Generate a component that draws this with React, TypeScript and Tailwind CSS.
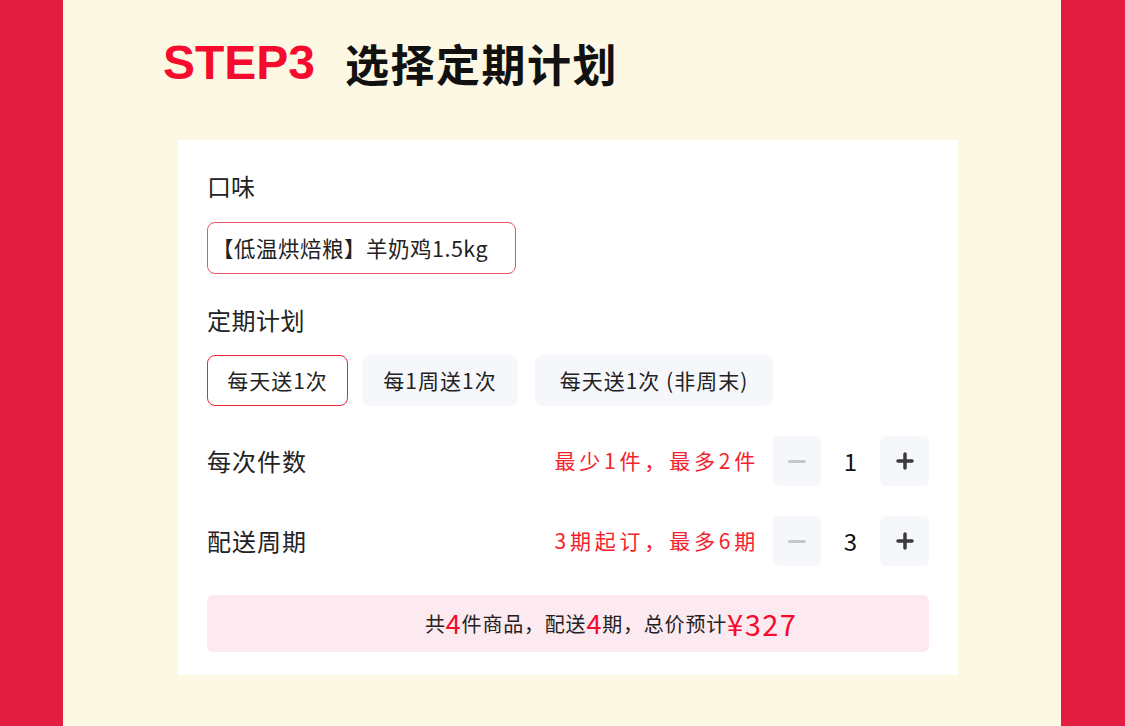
import { ReactNode } from "react";

const font = { fontFamily: '"Noto Sans CJK SC", "Noto Sans", sans-serif' };

const Stepper = ({ value }: { value: number }) => (
    <div className="flex items-center">
        <button className="w-[48px] h-[50px] rounded-md bg-[#f6f7fa] flex items-center justify-center">
            <span className="block w-[18px] h-[3px] rounded bg-[#c4c6cc]" />
        </button>
        <span className="w-[59px] text-center text-[24px] text-[#111]">{value}</span>
        <button className="w-[49px] h-[50px] rounded-md bg-[#f6f7fa] flex items-center justify-center">
            <svg width="18" height="18" viewBox="0 0 18 18">
                <path d="M9 2v14M2 9h14" stroke="#3a3b3f" strokeWidth="3.5" strokeLinecap="round" />
            </svg>
        </button>
    </div>
);

const Row = ({ label, hint, value }: { label: string; hint: string; value: number }) => (
    <div className="flex items-center justify-between h-[50px]">
        <span className="text-[24px] text-[#222] tracking-[1px]">{label}</span>
        <div className="flex items-center">
            <span className="text-[21px] text-[#f5222d] mr-[14px] tracking-[3.8px]">{hint}</span>
            <Stepper value={value} />
        </div>
    </div>
);

const Chip = ({ children, active, w }: { children: ReactNode; active?: boolean; w: string }) => (
    <button className={`${w} h-[51px] rounded-lg text-[21px] tracking-[1px] text-[#222] flex items-center justify-center ${active ? "border border-[#f0253a] bg-white" : "bg-[#f6f7fb] border border-transparent"}`}>
        {children}
    </button>
);

export default function App() {
    return (
        <div className="w-[1125px] h-[726px] flex bg-[#e31c41] overflow-hidden" style={font}>
            <div className="ml-[63px] w-[998px] h-full bg-[#fdf8e3] flex flex-col">
                <div className="flex items-center h-[124px] pl-[100px] pt-[2px]">
                    <span className="text-[48px] font-bold text-[#f60a2e]" style={{ fontFamily: '"Liberation Sans", sans-serif' }}>STEP3</span>
                    <span className="ml-[30px] text-[44px] font-bold text-[#111] tracking-[1.5px]">选择定期计划</span>
                </div>
                <div className="ml-[115px] mt-[16px] w-[780px] h-[535px] bg-white px-[29px] pt-[28px]">
                    <div className="text-[24px] text-[#222] leading-[36px]">口味</div>
                    <div className="mt-[18px] inline-flex items-center h-[52px] w-[309px] px-[4px] border border-[#f0525f] rounded-lg text-[21.5px] tracking-[0.5px] text-[#222]">
                        【低温烘焙粮】羊奶鸡1.5kg
                    </div>
                    <div className="mt-[28px] text-[24px] text-[#222] leading-[36px] tracking-[0.5px]">定期计划</div>
                    <div className="mt-[17px] flex">
                        <Chip active w="w-[141px]">每天送1次</Chip>
                        <div className="ml-[14px]"><Chip w="w-[156px]">每1周送1次</Chip></div>
                        <div className="ml-[17px]"><Chip w="w-[238px]">每天送1次 (非周末)</Chip></div>
                    </div>
                    <div className="mt-[30px]">
                        <Row label="每次件数" hint="最少1件，最多2件" value={1} />
                        <div className="h-[30px]" />
                        <Row label="配送周期" hint="3期起订，最多6期" value={3} />
                    </div>
                    <div className="mt-[29px] h-[57px] rounded-md bg-[#fdeaf0] flex items-center pl-[218px] text-[20px] tracking-[0.8px] text-[#222]">
                        共<span className="text-[27px] text-[#f60a2e]">4</span>件商品，配送<span className="text-[27px] text-[#f60a2e]">4</span>期，总价预计<span className="text-[29px] text-[#f60a2e] tracking-[1.5px]">¥327</span>
                    </div>
                </div>
            </div>
        </div>
    );
}
